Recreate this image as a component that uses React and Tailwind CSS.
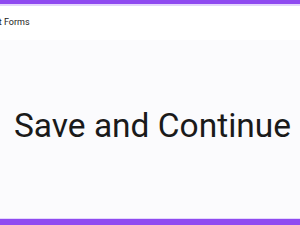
export default function App() {
  return (
    <div className="flex h-[225px] w-[300px] flex-col overflow-hidden bg-[#fbfbfd] font-['Roboto',sans-serif]">
      <div className="h-[4px] bg-[#8f4af0]" />
      <div className="h-[2px] bg-[#e4d6fc]" />
      {/* header */}
      <div className="flex h-[34px] items-center overflow-hidden bg-white">
        <span className="ml-[-37px] whitespace-nowrap text-[9px] text-[#222]">Microsoft Forms</span>
      </div>
      <div className="flex flex-1 items-center justify-center">
        <h1 className="ml-[5px] mt-[-6px] text-[33.5px] font-normal leading-none text-[#1a1a1a]">Save and Continue</h1>
      </div>
      <div className="h-px bg-[#e4d6fc]" />
      <div className="h-[6px] bg-[#8f4af0]" />
    </div>
  );
}
